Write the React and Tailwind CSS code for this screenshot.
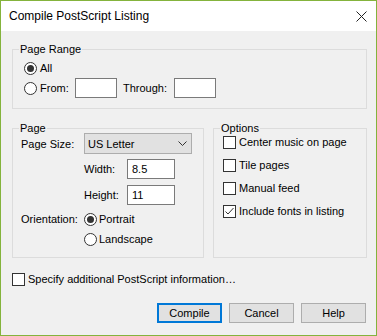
import React from 'react';

const Radio = ({ checked }) => (
  <span className="flex h-[13px] w-[13px] shrink-0 items-center justify-center rounded-full border border-[#333333] bg-white">
    {checked && <span className="h-[7px] w-[7px] rounded-full bg-[#333333]" />}
  </span>
);

const CheckBox = ({ checked }) => (
  <span className="flex h-[13px] w-[13px] shrink-0 items-center justify-center border border-[#333333] bg-white">
    {checked && (
      <svg width="11" height="11" viewBox="0 0 11 11" fill="none">
        <path d="M1.5 5.5 L4 8 L9.5 2" stroke="#333333" strokeWidth="1" />
      </svg>
    )}
  </span>
);

const TextBox = ({ value, className }) => (
  <div className={`flex h-[20px] items-center border border-[#7a7a7a] bg-white pl-[4px] ${className}`}>
    {value}
  </div>
);

const Group = ({ label, className, children }) => (
  <div className={`relative border border-[#dcdcdc] ${className}`}>
    <span className="absolute left-[6px] top-[-7px] bg-[#f0f0f0] px-[1px] leading-[13px]">{label}</span>
    {children}
  </div>
);

const Option = ({ label, checked }) => (
  <div className="flex h-[16px] items-center">
    <CheckBox checked={checked} />
    <span className="ml-[3px] leading-[14px]">{label}</span>
  </div>
);

const Button = ({ children, primary }) => (
  <button
    className={`flex h-[20px] w-[65px] items-center justify-center bg-[#e1e1e1] ${
      primary ? 'border-2 border-[#0078d7]' : 'border border-[#adadad]'
    }`}
  >
    {children}
  </button>
);

export default function App() {
  return (
    <div className="flex h-[336px] w-[377px] flex-col border border-[#84b33c] bg-[#f0f0f0] font-['Liberation_Sans',Arial,sans-serif] text-[11px] leading-[16px] text-black">
      {/* title bar */}
      <div className="flex h-[30px] shrink-0 items-center justify-between bg-white pl-[8px] pr-[9px]">
        <span className="text-[12px]">Compile PostScript Listing</span>
        <svg width="11" height="11" viewBox="0 0 11 11" fill="none">
          <path d="M0.5 0.5 L10.5 10.5 M10.5 0.5 L0.5 10.5" stroke="#222222" strokeWidth="1" />
        </svg>
      </div>

      <div className="flex flex-col pl-[11px] pr-[9px]">
        <Group label="Page Range" className="mt-[18px] h-[60px]">
          <div className="flex flex-col gap-[2px] pl-[11px] pt-[10px]">
            <div className="flex h-[16px] items-center">
              <Radio checked />
              <span className="ml-[3px]">All</span>
            </div>
            <div className="flex h-[20px] items-center">
              <Radio />
              <span className="ml-[3px] w-[35px]">From:</span>
              <TextBox className="w-[42px]" />
              <span className="ml-[6px] w-[51px]">Through:</span>
              <TextBox className="w-[42px]" />
            </div>
          </div>
        </Group>

        <div className="mt-[19px] flex h-[130px] gap-[9px]">
          <Group label="Page" className="w-[192px]">
            <div className="flex flex-col pl-[8px] pt-[4px]">
              <div className="flex h-[21px] items-center">
                <span className="w-[63px]">Page Size:</span>
                <div className="flex h-[21px] w-[108px] items-center justify-between border border-[#adadad] bg-[#e1e1e1] pl-[3px] pr-[4px]">
                  <span>US Letter</span>
                  <svg width="9" height="5" viewBox="0 0 9 5" fill="none">
                    <path d="M0.5 0.5 L4.5 4.5 L8.5 0.5" stroke="#333333" strokeWidth="1" />
                  </svg>
                </div>
              </div>
              <div className="mt-[5px] flex h-[20px] items-center pl-[63px]">
                <span className="w-[43px]">Width:</span>
                <TextBox value="8.5" className="w-[48px]" />
              </div>
              <div className="mt-[6px] flex h-[20px] items-center pl-[63px]">
                <span className="w-[43px]">Height:</span>
                <TextBox value="11" className="w-[48px]" />
              </div>
              <div className="mt-[6px] flex h-[16px] items-center">
                <span className="w-[63px]">Orientation:</span>
                <Radio checked />
                <span className="ml-[2px]">Portrait</span>
              </div>
              <div className="mt-[4px] flex h-[16px] items-center pl-[63px]">
                <Radio />
                <span className="ml-[2px]">Landscape</span>
              </div>
            </div>
          </Group>

          <Group label="Options" className="w-[154px]">
            <div className="flex flex-col gap-[7px] pl-[9px] pt-[5px]">
              <Option label="Center music on page" />
              <Option label="Tile pages" />
              <Option label="Manual feed" />
              <Option label="Include fonts in listing" checked />
            </div>
          </Group>
        </div>

        <div className="mt-[13px] flex h-[16px] items-center">
          <CheckBox />
          <span className="ml-[3px]">Specify additional PostScript information…</span>
        </div>

        <div className="mt-[16px] flex justify-end gap-[7px] pr-[1px]">
          <Button primary>Compile</Button>
          <Button>Cancel</Button>
          <Button>Help</Button>
        </div>
      </div>
    </div>
  );
}
